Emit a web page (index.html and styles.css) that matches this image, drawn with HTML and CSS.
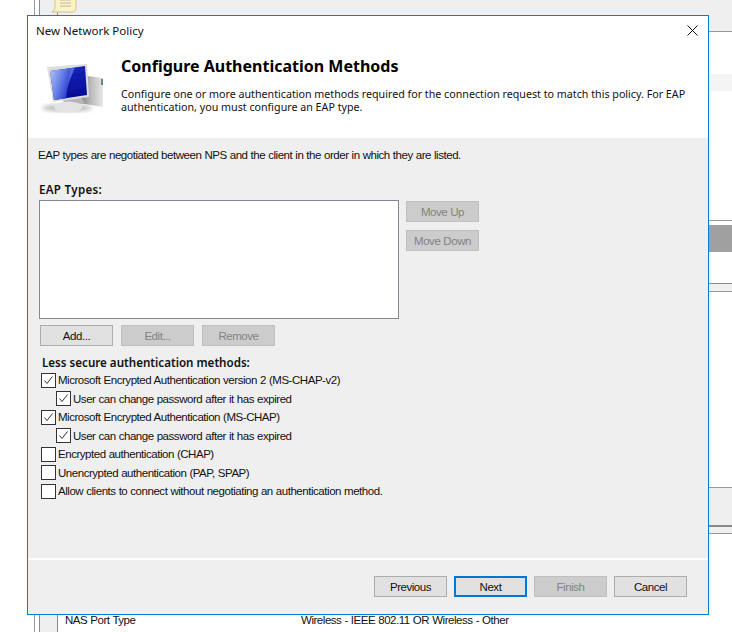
FILE: index.html
```html
<!DOCTYPE html>
<html>
<head>
  <meta charset="utf-8">
  <title>New Network Policy</title>
  <link rel="stylesheet" href="styles.css">
</head>
<body>
  <!-- console window behind the dialog -->
  <div class="back-rail"></div>
  <div class="back-top"></div>
  <svg class="back-note" width="28" height="14" viewBox="0 0 28 14">
    <path d="M4 -4H25V8Q25 12 22 12H1Q4 11 4 8Z" fill="#fdf3c4" stroke="#d8c67a"/>
    <path d="M9 0H20M9 3H20M9 6H20" stroke="#b9b9a8"/>
  </svg>
  <div class="back-right">
    <div class="br-a"></div>
    <div class="br-b"></div>
    <div class="br-c"></div>
    <div class="br-d"></div>
    <div class="br-e"></div>
    <div class="br-f"></div>
    <div class="br-g"></div>
    <div class="br-h"></div>
  </div>
  <div class="back-row">
    <span class="back-name">NAS Port Type</span>
    <span>Wireless - IEEE 802.11 OR Wireless - Other</span>
  </div>

  <div class="dialog">
    <div class="header">
      <div class="titlebar">
        <span class="window-title">New Network Policy</span>
        <svg class="close" width="11" height="11" viewBox="0 0 11 11">
          <path d="M0.5 0.5L10.5 10.5M10.5 0.5L0.5 10.5" stroke="#111" stroke-width="1"/>
        </svg>
      </div>
      <div class="intro">
        <svg class="monitor" width="66" height="54" viewBox="0 0 66 54">
          <defs>
            <linearGradient id="glass" x1="0" y1="0" x2="1" y2="0.5">
              <stop offset="0" stop-color="#b4c4f6"/>
              <stop offset="0.55" stop-color="#6a82e8"/>
              <stop offset="1" stop-color="#2a3fd2"/>
            </linearGradient>
            <linearGradient id="deep" x1="0" y1="0" x2="0.3" y2="1">
              <stop offset="0" stop-color="#1a2bc0"/>
              <stop offset="1" stop-color="#050c96"/>
            </linearGradient>
            <linearGradient id="tower" x1="0" y1="0" x2="1" y2="0">
              <stop offset="0" stop-color="#777"/>
              <stop offset="0.5" stop-color="#bbb"/>
              <stop offset="1" stop-color="#e8e8e8"/>
            </linearGradient>
            <filter id="soft"><feGaussianBlur stdDeviation="0.4"/></filter>
            <filter id="softer"><feGaussianBlur stdDeviation="2"/></filter>
          </defs>
          <ellipse cx="28" cy="46" rx="25" ry="3.500" fill="#bbb" filter="url(#softer)"/>
          <g filter="url(#soft)">
            <path d="M48 14L64 16V45L40 41Z" fill="url(#tower)"/>
            <rect x="62" y="17" width="2" height="6" fill="#5f8f6f"/>
            <path d="M24 38L42 35L46 41L26 44Z" fill="#b5b5b5"/>
            <ellipse cx="29" cy="45" rx="14" ry="5.500" fill="#e4e4e4"/>
            <path d="M8 5L48 2L50 35L14 40Z" fill="#dedede"/>
            <path d="M11 9L46 4L48 33L15 38Z" fill="url(#deep)"/>
            <path d="M11 9L31 6.200L27 36.200L15 38Z" fill="url(#glass)"/>
            <path d="M31 6.200L36 5.500L30 20L28 28Z" fill="#5f78ea" opacity="0.8"/>
          </g>
        </svg>
        <div class="intro-text">
          <h1>Configure Authentication Methods</h1>
          <p>Configure one or more authentication methods required for the connection request to match this policy. For EAP authentication, you must configure an EAP type.</p>
        </div>
      </div>
    </div>

    <div class="body">
      <p class="note">EAP types are negotiated between NPS and the client in the order in which they are listed.</p>
      <div class="section-label eap-label">EAP Types:</div>
      <div class="eap">
        <div class="listbox"></div>
        <div class="side-buttons">
          <button class="btn disabled">Move Up</button>
          <button class="btn disabled">Move Down</button>
        </div>
      </div>
      <div class="list-buttons">
        <button class="btn">Add...</button>
        <button class="btn disabled">Edit...</button>
        <button class="btn disabled">Remove</button>
      </div>
      <div class="section-label methods-label">Less secure authentication methods:</div>
      <div class="methods">
        <label class="check on">Microsoft Encrypted Authentication version 2 (MS-CHAP-v2)</label>
        <label class="check sub on">User can change password after it has expired</label>
        <label class="check on">Microsoft Encrypted Authentication (MS-CHAP)</label>
        <label class="check sub on">User can change password after it has expired</label>
        <label class="check">Encrypted authentication (CHAP)</label>
        <label class="check">Unencrypted authentication (PAP, SPAP)</label>
        <label class="check">Allow clients to connect without negotiating an authentication method.</label>
      </div>
    </div>

    <div class="footer">
      <button class="btn">Previous</button>
      <button class="btn default">Next</button>
      <button class="btn disabled">Finish</button>
      <button class="btn">Cancel</button>
    </div>
  </div>
</body>
</html>
```

FILE: styles.css
```css
* {
  margin: 0;
  padding: 0;
  box-sizing: border-box;
}

body {
  width: 732px;
  height: 632px;
  overflow: hidden;
  position: relative;
  background: #fff;
  font-family: "Liberation Sans", Arial, sans-serif;
  font-size: 11.500px;
  letter-spacing: -0.46px;
  word-spacing: 0.3px;
  color: #111;
}

/* background window */
.back-rail {
  position: absolute;
  left: 34px;
  top: 0;
  width: 24px;
  height: 632px;
  background: #efefef;
  border-left: 1px solid #9a9a9a;
  border-right: 1px solid #8c8c8c;
  box-shadow: inset 4px 0 0 #fff, inset 5px 0 0 #8c8c8c;
}

.back-top {
  position: absolute;
  left: 58px;
  top: 0;
  width: 674px;
  height: 31px;
  background: #efefef;
}

.back-note {
  position: absolute;
  left: 51px;
  top: 0;
}

.back-right {
  position: absolute;
  left: 700px;
  top: 31px;
  width: 32px;
}

.back-right div {
  position: absolute;
  left: 0;
  width: 32px;
}

.br-a { top: 0; height: 1px; background: #999; }
.br-b { top: 43px; height: 17px; background: #f4f4f4; }
.br-c { top: 189px; height: 1px; background: #999; }
.br-d { top: 194px; height: 27px; background: #a0a0a0; }
.br-e { top: 252px; height: 9px; background: #f0f0f0; border-top: 1px solid #888; border-bottom: 1px solid #999; }
.br-f { top: 456px; height: 1px; background: #999; }
.br-g { top: 457px; height: 38px; background: #efefef; }
.br-h { top: 494px; height: 9px; background: #efefef; border-top: 2px solid #8a8a8a; border-bottom: 1px solid #999; }

.back-row {
  position: absolute;
  left: 65px;
  top: 613px;
  display: flex;
  line-height: 14px;
}

.back-name {
  width: 236px;
}

/* dialog */
.dialog {
  position: absolute;
  left: 27px;
  top: 15px;
  width: 682px;
  height: 600px;
  border: 1px solid #0a7bd1;
  background: #efefef;
  display: flex;
  flex-direction: column;
}

.header {
  height: 122px;
  background: #fff;
}

.titlebar {
  display: flex;
  align-items: center;
  justify-content: space-between;
  height: 30px;
  padding: 0 10px 0 8px;
}

.window-title {
  font-family: "Noto Sans", sans-serif;
  font-size: 11.500px;
  letter-spacing: 0;
  word-spacing: 0;
  margin-top: -2px;
}

.close {
  margin-top: -1px;
}

.intro {
  display: flex;
  padding-left: 11px;
}

.monitor {
  margin-top: 16px;
  flex: none;
}

.intro-text {
  margin-left: 16px;
  padding-top: 9px;
  width: 572px;
}

h1 {
  font-family: "Noto Sans", sans-serif;
  font-size: 16px;
  font-weight: 700;
  line-height: 22px;
  letter-spacing: 0;
  word-spacing: 0;
  color: #000;
}

.intro-text p {
  font-family: "Noto Sans", sans-serif;
  font-size: 10.700px;
  line-height: 13px;
  letter-spacing: 0;
  word-spacing: 0;
  margin-top: 11px;
}

.body {
  flex: 1;
  padding: 10px 0 0 11px;
  border-bottom: 2px solid #fff;
}

.note {
  line-height: 14px;
  margin: 0 0 20px -1px;
}

.section-label {
  font-family: "Noto Sans", sans-serif;
  font-size: 11.600px;
  font-weight: 600;
  line-height: 15px;
  letter-spacing: 0;
  word-spacing: 0;
}

.eap-label {
  letter-spacing: 0.3px;
}

.eap {
  display: flex;
  gap: 7px;
  margin-top: 3px;
}

.listbox {
  width: 360px;
  height: 119px;
  background: #fff;
  border: 1px solid #828790;
}

.side-buttons {
  display: flex;
  flex-direction: column;
  gap: 8px;
  padding-top: 1px;
}

.btn {
  width: 73px;
  height: 21px;
  background: #e1e1e1;
  border: 1px solid #adadad;
  font-family: "Liberation Sans", Arial, sans-serif;
  font-size: 11.500px;
  letter-spacing: -0.46px;
  word-spacing: 0.3px;
  color: #111;
}

.btn.disabled {
  background: #ccc;
  border-color: #bfbfbf;
  color: #838383;
}

.btn.default {
  border: 2px solid #0078d7;
}

.list-buttons {
  display: flex;
  gap: 8px;
  margin: 6px 0 0 1px;
}

.methods-label {
  margin: 9px 0 0 3px;
}

.methods {
  margin-top: 1px;
}

.check {
  display: flex;
  align-items: center;
  height: 18.500px;
  padding-left: 2px;
}

.check::before {
  content: "";
  width: 13px;
  height: 13px;
  margin-right: 2px;
  flex: none;
  background: #fff;
  border: 1px solid #333;
}

.check.sub {
  padding-left: 17px;
}

.check.on::before {
  background: #fff url("data:image/svg+xml,%3Csvg xmlns='http://www.w3.org/2000/svg' width='11' height='11'%3E%3Cpath d='M1.500 5.500L4 8.500L9.500 1.500' fill='none' stroke='%23333' stroke-width='1'/%3E%3C/svg%3E") center no-repeat;
}

.footer {
  height: 54px;
  display: flex;
  justify-content: flex-end;
  gap: 7px;
  padding: 16px 21px 0 0;
}
```
